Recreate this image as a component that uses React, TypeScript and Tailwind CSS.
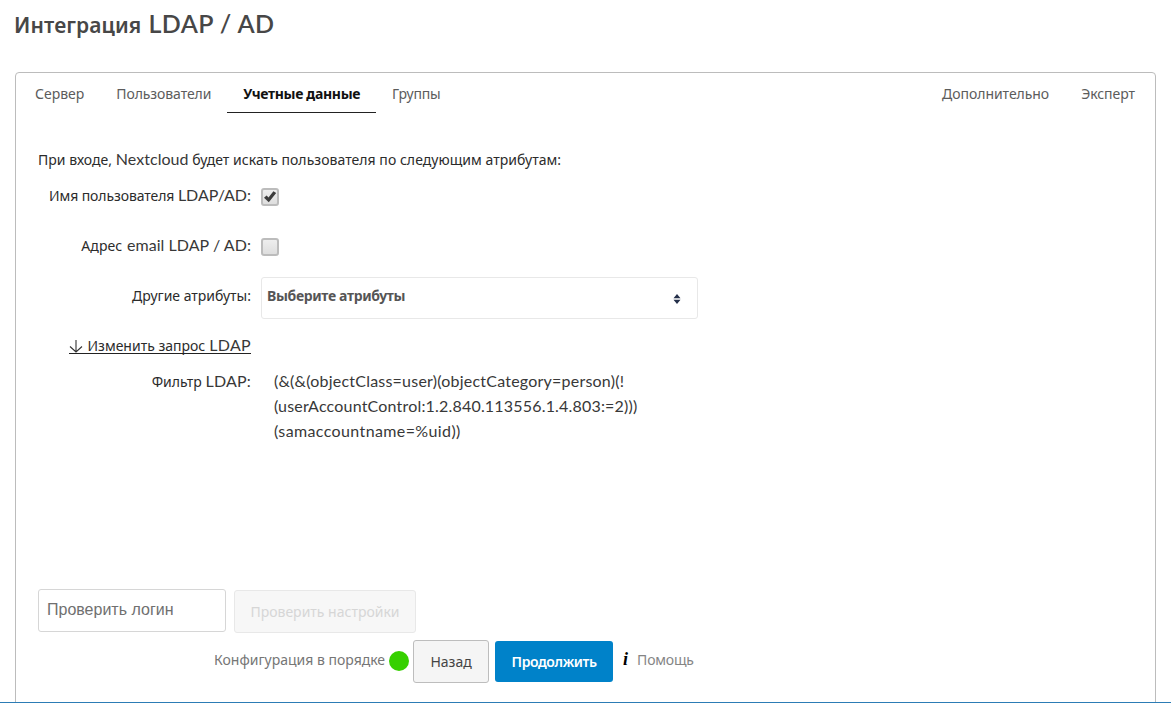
import type { ReactNode } from "react";

const La = ({ children, className = "" }: { children: ReactNode; className?: string }) => (
  <span className={`font-[Lato] text-[16px] text-[#383838] ${className}`}>{children}</span>
);

const Tab = ({ children, className = "" }: { children: ReactNode; className?: string }) => (
  <button className={`h-[33px] px-4 pb-[6px] text-[#5c5c5c] ${className}`}>{children}</button>
);

const Row = ({ label, className, children }: { label: ReactNode; className: string; children?: ReactNode }) => (
  <div className={`flex items-start ${className}`}>
    <div className="w-[235px] text-right leading-[25px]">{label}</div>
    {children}
  </div>
);

const Checkbox = ({ checked = false }: { checked?: boolean }) => (
  <span
    role="checkbox"
    aria-checked={checked}
    className="mt-[6px] ml-[10px] flex size-[18px] items-center justify-center rounded-[3px] border-2 border-[#bcbcbc] bg-linear-to-b from-[#eeeeee] to-[#dedede]"
  >
    {checked && (
      <svg width="14" height="14" viewBox="0 0 14 14" className="shrink-0">
        <path d="M1 7.8 3.6 5.6 5.5 7.4 10.4 1.2 13.2 3 5.8 12.3Z" fill="#3c3c3c" />
      </svg>
    )}
  </span>
);

export default function App() {
  return (
    <div className="flex h-[703px] w-full flex-col overflow-hidden border-b border-[#2c7cb5] bg-white font-['Noto_Sans',sans-serif] text-[14px] whitespace-nowrap text-[#2b2b2b]">
      <h2 className="ml-[14px] flex h-[72px] shrink-0 items-baseline gap-[7px] pt-[5px] text-[21px] leading-[36px] font-semibold text-[#474747]">
        <span className="tracking-[0.1px]">Интеграция</span>
        <span className="font-[Lato] text-[25px] tracking-[0.4px]">LDAP / AD</span>
      </h2>

      <main className="mr-[15px] ml-[15px] flex h-[680px] shrink-0 flex-col rounded-[4px] border border-[#bcbcbc]">
        <nav className="flex pt-[7px] pr-1 pl-[3px]">
          <Tab>Сервер</Tab>
          <Tab className="tracking-[-0.1px]">Пользователи</Tab>
          <Tab className="border-b border-[#222] font-bold tracking-[-0.33px] text-[#111]!">Учетные данные</Tab>
          <Tab className="tracking-[-0.2px]">Группы</Tab>
          <Tab className="ml-auto tracking-[-0.05px]">Дополнительно</Tab>
          <Tab className="tracking-[-0.05px]">Эксперт</Tab>
        </nav>

        <p className="mt-[33px] ml-[22px] h-[36px] leading-[25px] tracking-[0.04px]">
          При входе, <La>Nextcloud</La> будет искать пользователя по следующим атрибутам:
        </p>

        <Row className="h-[50px]" label={<><span className="tracking-[-0.1px]">Имя пользователя</span> <La>LDAP/AD:</La></>}>
          <Checkbox checked />
        </Row>
        <Row className="h-[51px]" label={<><span className="mr-px tracking-[0.1px]">Адрес</span> <La className="tracking-[0.05px]">email LDAP / AD:</La></>}>
          <Checkbox />
        </Row>
        <Row className="h-[50px]" label="Другие атрибуты:">
          <button className="-mt-[6px] ml-[10px] flex h-[42px] w-[437px] items-center justify-between rounded-[3px] border border-[#e8e8e8] pr-[16px] pl-[5px] font-bold tracking-[-0.35px] text-[#555]">
            <span className="pb-[5px]">Выберите атрибуты</span>
            <svg width="8" height="10" viewBox="0 0 8 10" className="mt-[2px]">
              <path d="M4 0 7.5 4.2H.5ZM4 10 .5 5.8H7.5Z" fill="#25304a" />
            </svg>
          </button>
        </Row>
        <Row
          className="h-[35px]"
          label={
            <a className="inline-flex items-baseline border-b border-[#222] leading-[15px]">
              <svg width="14" height="13" viewBox="0 0 14 13" className="mr-[4px] translate-y-[2px]">
                <path d="M7 0V12M1 6.5 7 12 13 6.5" fill="none" stroke="#333" strokeWidth="1.1" />
              </svg>
              <span className="mr-1">Изменить запрос</span>
              <La className="tracking-[0.3px]">LDAP</La>
            </a>
          }
        />
        <Row className="h-[211px]" label={<>Фильтр <La className="tracking-[0.2px]">LDAP:</La></>}>
          <div className="ml-[23px] font-[Lato] text-[16px] leading-[25px] text-[#383838]">
            <div className="tracking-[0.22px]">(&amp;(&amp;(objectClass=user)(objectCategory=person)(!</div>
            <div className="tracking-[0.19px]">(userAccountControl:1.2.840.113556.1.4.803:=2)))</div>
            <div className="tracking-[0.38px]">(samaccountname=%uid))</div>
          </div>
        </Row>

        <div className="ml-[22px] flex items-start gap-2">
          <input
            placeholder="Проверить логин"
            className="mt-[10px] h-[43px] w-[188px] rounded-[3px] border border-[#d6d6d6] px-2 pb-[1px] font-['Liberation_Sans'] text-[16px] placeholder:text-[#707070]"
          />
          <button className="mt-[11px] h-[43px] w-[182px] rounded-[3px] border border-[#e8e8e8] bg-[#f7f7f7] text-[#d6d6d6]">
            Проверить настройки
          </button>
        </div>
        <div className="mt-[7px] ml-[198px] flex items-center">
          <span className="pb-[4px] text-[#767676]">Конфигурация в порядке</span>
          <span className="mb-[2px] ml-[4px] size-5 rounded-full bg-[#36d000]" />
          <button className="ml-[4px] h-[43px] w-[76px] rounded-[3px] border border-[#bdbdbd] bg-[#f5f5f5] text-[#444]">Назад</button>
          <button className="ml-[6px] h-[41px] w-[118px] rounded-[3px] bg-[#0082c9] font-semibold tracking-[-0.4px] text-white">Продолжить</button>
          <span className="mb-[5px] ml-[10px] font-['Liberation_Serif'] text-[18px] font-bold text-black italic">i</span>
          <span className="ml-[9px] pb-[4px] tracking-[-0.2px] text-[#858585]">Помощь</span>
        </div>
      </main>
    </div>
  );
}
